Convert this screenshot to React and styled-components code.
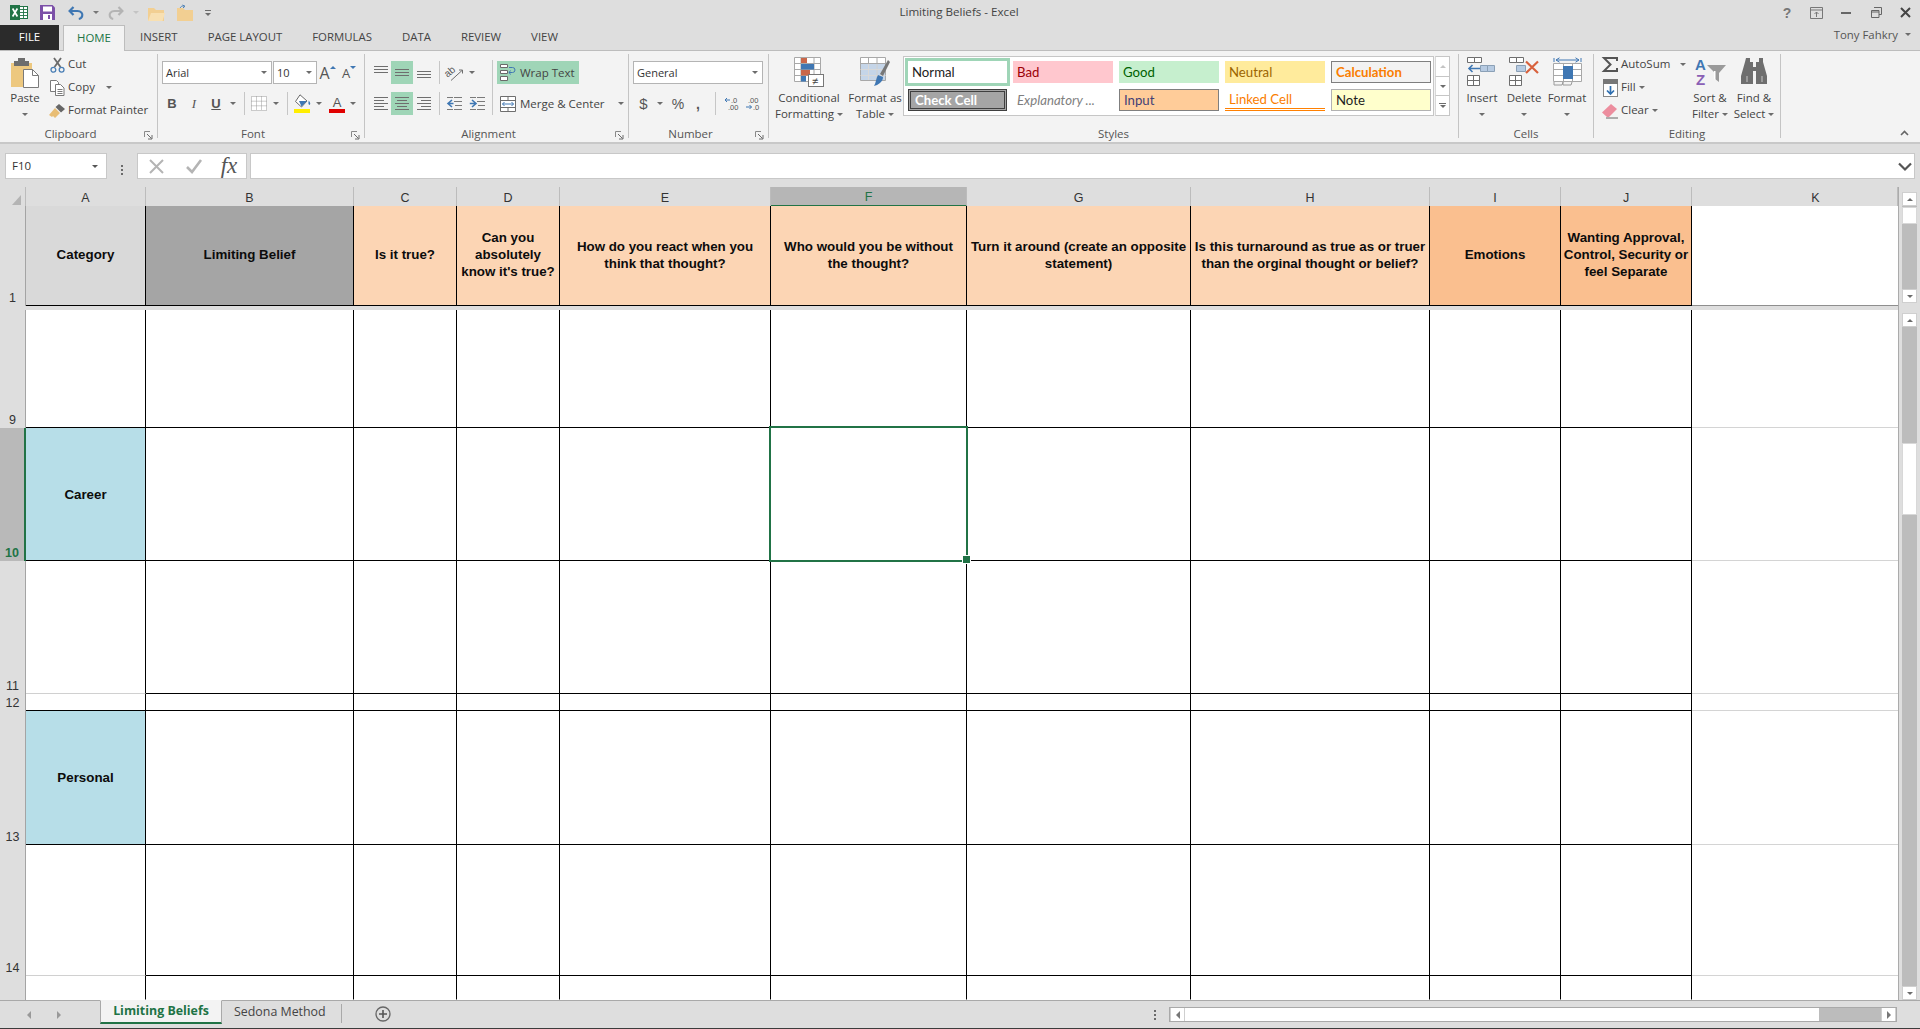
import React from "react";
import styled, { createGlobalStyle } from "styled-components";

const UI = `"Open Sans", "Noto Sans", sans-serif`;
const CELL = `"Liberation Sans", Arial, sans-serif`;
const GREEN = "#217346";

const Global = createGlobalStyle`
  html, body { margin: 0; padding: 0; overflow: hidden; background: #dedede; }
  * { box-sizing: border-box; }
`;

const Win = styled.div`
  width: 1920px; height: 1029px; overflow: hidden;
  display: flex; flex-direction: column;
  background: #dedede; color: #444; font: 11.5px/16px ${UI};
  border-bottom: 1px solid #3c3c3c;
`;
const Svg = styled.svg`display: block; flex-shrink: 0; overflow: visible;`;
const Slot = styled.div`
  width: ${p => p.$w}px; height: ${p => p.$h || 23}px; flex-shrink: 0;
  display: flex; align-items: center; justify-content: center;
  background: ${p => p.$on ? "#9fd5b7" : "transparent"};
`;
const Caret = styled.span`
  display: inline-block; width: 0; height: 0; flex-shrink: 0;
  border-left: 3px solid transparent; border-right: 3px solid transparent;
  border-top: 3px solid ${p => p.$c || "#6c6c6c"};
  margin-left: ${p => p.$ml || 0}px; vertical-align: middle;
`;
const CaretUp = styled(Caret)`
  border-top: 0; border-bottom: 3px solid ${p => p.$c || "#6c6c6c"};
`;
const RaisedCaret = styled(Caret)`margin-bottom: 10px;`;
const RaisedCaretUp = styled(CaretUp)`margin-bottom: 10px;`;
const FadedCaretUp = styled(CaretUp)`opacity: .4;`;

/* title bar */
const TitleBar = styled.div`
  height: 25px; display: grid; grid-template-columns: 1fr auto 1fr; align-items: center;
`;
const Qat = styled.div`display: flex; align-items: center; padding-left: 10px;`;
const QatMore = styled.div`display: flex; flex-direction: column; align-items: center; gap: 2px;`;
const QatDash = styled.span`width: 6px; height: 1px; background: #6c6c6c;`;
const Title = styled.div`color: #444; font-size: 11.6px; padding-right: 2px; padding-bottom: 1px;`;
const WinControls = styled.div`display: flex; justify-content: flex-end;`;
const HelpMark = styled.span`font: bold 14px/16px ${CELL}; color: #777;`;

/* tabs */
const TabRow = styled.div`height: 25px; display: flex; align-items: stretch; position: relative; z-index: 1;`;
const FileTab = styled.div`
  width: 59px; margin-right: 4px; background: #2b2b2b; color: #fff;
  display: flex; align-items: center; justify-content: center; font-size: 11.4px; padding-bottom: 1px;
`;
const Tab = styled.div`
  padding: 0 ${p => p.$active ? 14 : 15}px 2px; display: flex; align-items: center; font-size: 11.4px;
  color: ${p => p.$active ? GREEN : "#444"};
  ${p => p.$active && `background: #f3f3f3; border: 1px solid #bdbdbd; border-bottom: 0; height: 26px; width: 62px; justify-content: center;`}
`;
const User = styled.div`
  margin-left: auto; padding: 0 9px 6px 0; display: flex; align-items: center; font-size: 11.4px; color: #555;
`;

/* ribbon */
const Ribbon = styled.div`
  height: 94px; flex-shrink: 0; display: flex; align-items: flex-start;
  background: #f3f3f3; border-top: 1px solid #bdbdbd; border-bottom: 2px solid #c8c8c8;
  padding-top: 3px;
`;
const Group = styled.section`
  width: ${p => p.$w}px; height: 84px; flex-shrink: 0;
  display: flex; flex-direction: column; border-right: 1px solid #c4c4c4;
`;
const GroupBody = styled.div`
  height: 71px; display: flex; align-items: flex-start;
  padding-left: ${p => p.$pl || 0}px;
`;
const GroupLabel = styled.div`
  height: 13px; line-height: 18px; display: flex; align-items: flex-start; color: #555;
`;
const GroupName = styled.span`flex: 1; text-align: center;`;
const LauncherBox = styled.span`width: 16px; padding: 6px 0 0 3px; flex-shrink: 0;`;
const Collapse = styled.div`margin: 76px 11px 0 auto;`;

const Big = styled.div`
  width: ${p => p.$w}px; flex-shrink: 0; display: flex; flex-direction: column; align-items: center;
  text-align: center; margin-left: ${p => p.$ml || 0}px; color: #444; white-space: nowrap;
`;
const BigIcon = styled.div`height: 36px; display: flex; align-items: flex-start; justify-content: center; padding-top: ${p => p.$pt ?? 3}px;`;
const BigLine = styled.span`height: 16px; display: block;`;
const Stack = styled.div`
  display: flex; flex-direction: column; margin-left: ${p => p.$ml || 0}px; margin-top: -1px;
  width: ${p => p.$w ? p.$w + "px" : "auto"}; flex-shrink: 0;
`;
const TwoRows = styled.div`
  display: flex; flex-direction: column; margin-left: ${p => p.$ml || 0}px;
  width: ${p => p.$w ? p.$w + "px" : "auto"}; flex-shrink: 0; padding-top: 7px; gap: 8px;
`;
const Line = styled.div`display: flex; align-items: center; height: 23px; white-space: nowrap; color: #444;`;
const IconBox = styled.span`width: 16px; margin-right: 3px; flex-shrink: 0; display: flex; justify-content: center;`;
const LineText = styled.span`position: relative; top: -1px;`;

const Combo = styled.div`
  width: ${p => p.$w}px; height: 23px; margin-right: ${p => p.$mr || 0}px; flex-shrink: 0;
  background: #fff; border: 1px solid #b4b4b4; padding: 0 4px 0 3px;
  display: flex; align-items: center; justify-content: space-between; color: #333;
  font-size: 11px;
`;
const GrowA = styled.span`font: ${p => p.$s}px/18px ${UI}; color: #555;`;
const FontBtn = styled.span`
  font: ${p => p.$i ? "italic" : "normal"} ${p => p.$b ? "bold" : "normal"} 13px/16px ${p => p.$serif ? `"Liberation Serif", serif` : CELL};
  color: #555; text-decoration: ${p => p.$u ? "underline" : "none"};
`;
const ColorStack = styled.div`display: flex; flex-direction: column; align-items: center;`;
const ColorBar = styled.span`width: 16px; height: 4px; background: #e00000; margin-top: -2px;`;
const Sep = styled.span`width: 1px; height: 23px; background: #c6c6c6; display: block;`;
const VSep = styled.span`width: 1px; height: 55px; margin-top: 6px; background: #c6c6c6; flex-shrink: 0;`;
const WideBtn = styled.div`
  width: ${p => p.$w}px; height: 23px; display: flex; align-items: center; padding-left: 3px; gap: 4px; white-space: nowrap;
  background: ${p => p.$on ? "#9fd5b7" : "transparent"}; color: #444;
`;
const NumSym = styled.span`font: ${p => p.$s || 14}px/18px ${CELL}; color: #555;`;
const BoldSym = styled.b`font-weight: 700;`;

/* styles gallery */
const Gallery = styled.div`
  display: flex; margin-top: 2px; height: 60px; flex-shrink: 0;
`;
const GalleryGrid = styled.div`
  width: 531px; height: 60px; background: #fff; border: 1px solid #c6c6c6;
  padding: 4px 3px 4px 4px; display: grid; gap: 6px;
  grid-template-columns: 99px repeat(4, 100px); grid-template-rows: 22px 22px;
`;
const StyleCell = styled.div`
  display: flex; align-items: center; padding-left: 4px; white-space: nowrap;
  font: ${p => p.$w || 400} 13.2px/20px Lato, sans-serif;
  font-style: ${p => p.$it ? "italic" : "normal"};
  color: ${p => p.$c || "#222"};
  background: ${p => p.$bg || "transparent"};
  border: ${p => p.$bd || "0"};
  border-bottom: ${p => p.$bb || ""};
  outline: ${p => p.$ring ? "3px solid #9fd5b7" : "0"};
`;
const GalleryScroll = styled.div`width: 15px; display: flex; flex-direction: column; margin-left: 1px;`;
const GalleryBtn = styled.div`
  flex: 1; background: #fff; border: 1px solid #c6c6c6; border-left: 1px solid #d8d8d8; margin-top: ${p => p.$mt || 0}px;
  display: flex; flex-direction: column; gap: 1px; align-items: center; justify-content: center;
`;
const GalleryDash = styled.span`width: 7px; height: 1px; background: #6c6c6c;`;

/* formula bar */
const FormulaRow = styled.div`
  height: 43px; flex-shrink: 0; padding: 9px 5px 0 5px; display: flex; align-items: flex-start;
`;
const BoxBase = styled.div`
  height: 26px; background: #fff; border: 1px solid #c8c8c8; display: flex; align-items: center;
`;
const NameBox = styled(BoxBase)`width: 102px; padding: 0 8px 0 6px; justify-content: space-between; color: #333;`;
const Dots = styled.div`width: ${p => p.$w}px; flex-shrink: 0; display: flex; flex-direction: column; gap: 2px; align-items: center; justify-content: center; height: 100%;`;
const Dot = styled.span`width: 2px; height: 2px; background: #6a6a6a;`;
const FxBox = styled(BoxBase)`width: 110px; margin-right: 3px;`;
const FxMark = styled.span`font: italic 23px/22px "Liberation Serif", serif; color: #555;`;
const FormulaInput = styled(BoxBase)`flex: 1; justify-content: flex-end; padding-right: 2px;`;

/* sheet */
const SheetArea = styled.div`flex: 1; min-height: 0; display: flex;`;
const SheetMain = styled.div`width: 1898px; display: flex; flex-direction: column; overflow: hidden;`;
const COLS = "26px 120px 208px 103px 103px 211px 196px 224px 239px 131px 131px 206px";
const GridRow = styled.div`
  display: grid; grid-template-columns: ${COLS}; height: ${p => p.$h}px; flex-shrink: 0;
`;
const Corner = styled.div`
  border-right: 1px solid #bcbcbc; border-bottom: 1px solid #9f9f9f; background: #dedede;
  display: flex; align-items: flex-end; justify-content: flex-end; padding: 0 4px 1px 0;
`;
const CornerMark = styled.span`
  width: 9px; height: 10px; background: #b4b4b4; clip-path: polygon(100% 0, 100% 100%, 0 100%);
`;
const ColHead = styled.div`
  display: flex; align-items: center; justify-content: center;
  font: 12.5px/16px ${CELL};
  border-right: 1px solid #bcbcbc; padding-top: 2px;
  padding-left: ${p => p.$pl || 0}px;
  background: ${p => p.$sel ? "#b6b6b6" : "#dedede"};
  color: ${p => p.$sel ? GREEN : "#333"};
  border-bottom: ${p => p.$sel ? `2px solid ${GREEN}` : "1px solid #9f9f9f"};
`;
const RowHead = styled.div`
  display: flex; align-items: flex-end; justify-content: center;
  font: ${p => p.$sel ? "bold" : "normal"} 12.5px/14px ${CELL};
  padding-bottom: 1px;
  background: ${p => p.$sel ? "#b9b9b9" : "#dedede"};
  color: ${p => p.$sel ? GREEN : "#333"};
  border-right: ${p => p.$sel ? `2px solid ${GREEN}` : "1px solid #a4a4a4"};
`;
const HeadCell = styled.div`
  display: flex; align-items: center; justify-content: center; text-align: center;
  white-space: pre-line; padding: 0 1px 2px;
  font: bold 13.33px/17px ${CELL}; color: #0c0c0c;
  background: ${p => p.$bg};
  border-right: ${p => p.$open ? "0" : "1px solid #000"};
  border-bottom: 1px solid ${p => p.$open ? "#8e8e8e" : "#000"};
`;
const Freeze = styled.div`height: 4px; flex-shrink: 0; background: #dedede;`;
const Cell = styled.div`
  position: relative; display: flex; align-items: center; justify-content: center;
  font: bold 13.33px/17px ${CELL}; color: #0c0c0c;
  background: ${p => p.$bg || "#fff"};
  border-right: ${p => p.$open ? "0" : "1px solid #000"};
  border-bottom: 1px solid ${p => p.$line || "#000"};
`;
const Selected = styled(Cell)`
  &::before {
    content: ""; position: absolute; left: -2px; top: -2px; right: -2px; bottom: -2px;
    border: 2px solid ${GREEN}; z-index: 2;
  }
  &::after {
    content: ""; position: absolute; right: -5px; bottom: -4px; width: 7px; height: 7px;
    background: ${GREEN}; border: 1px solid #fff; z-index: 3;
  }
`;

/* scrollbars */
const ScrollCol = styled.div`
  width: 22px; flex-shrink: 0; border-left: 1px solid #ababab; padding: 5px 3px 0 3px;
  display: flex; flex-direction: column; background: #dedede;
`;
const VBar = styled.div`
  display: flex; flex-direction: column; margin-top: ${p => p.$mt || 0}px;
  height: ${p => p.$h ? p.$h + "px" : "auto"}; flex: ${p => p.$h ? "none" : 1}; background: #bcbcbc;
`;
const ScrollBtn = styled.div`
  width: 100%; height: ${p => p.$h || 14}px; flex-shrink: 0; background: #fff; border: 1px solid #cfcfcf;
  display: flex; align-items: center; justify-content: center;
`;
const Thumb = styled.div`height: ${p => p.$h}px; background: #fff; flex-shrink: 0; border: 1px solid #d8d8d8; margin-top: ${p => p.$mt || 0}px;`;
const Track = styled.div`flex: 1;`;

/* sheet tabs */
const TabBar = styled.div`
  height: 28px; flex-shrink: 0; display: flex; align-items: stretch; background: #dedede; border-top: 1px solid #a9a9a9;
  padding-left: 14px; color: #444;
`;
const SheetTab = styled.div`
  width: 122px; margin: -1px 0 4px 28px; background: #f3f3f3; border: 1px solid #a9a9a9; border-top-color: #f3f3f3;
  border-bottom: 2px solid ${GREEN}; display: flex; align-items: center; justify-content: center;
  font: bold 12.4px/16px ${UI}; color: ${GREEN}; padding-bottom: 1px;
`;
const SheetTab2 = styled.div`
  padding: 0 13px 5px 12px; width: 119px; display: flex; align-items: center;
  font-size: 12.4px; color: #444; white-space: nowrap;
`;
const TabSep = styled.span`width: 1px; height: 19px; margin-top: 3px; background: #a9a9a9;`;
const PlusBox = styled.div`margin: 5px 0 0 33px;`;
const HScroll = styled.div`
  margin: 6px 23px 0 0; width: 728px; height: 15px; display: flex; background: #bcbcbc; border: 1px solid #a9a9a9;
`;
const HBtn = styled.div`width: 15px; background: #fff; border-right: 1px solid #cfcfcf; border-left: 1px solid #cfcfcf; display: flex; align-items: center; justify-content: center;`;
const HThumb = styled.div`width: 634px; background: #fff;`;
const TabDots = styled.div`margin: 6px 11px 0 auto; height: 15px; width: 6px;`;

/* ---------- icons ---------- */
const ExcelIcon = () => (
  <Svg width="18" height="15" viewBox="0 0 18 15">
    <rect x="6.5" y="1.5" width="11" height="12" fill="#fff" stroke={GREEN} />
    <path d="M10 4.5h7M10 7.5h7M10 10.5h7M13.5 2v11" stroke={GREEN} strokeWidth=".9" />
    <rect width="10" height="15" fill={GREEN} />
    <path d="M2.6 3.5 7.4 11.5M7.4 3.5 2.6 11.5" stroke="#fff" strokeWidth="1.7" />
  </Svg>
);
const SaveIcon = () => (
  <Svg width="15" height="15" viewBox="0 0 15 15">
    <path d="M0 0h12.5L15 2.5V15H0z" fill="#7c50a8" />
    <rect x="3" y="1.5" width="9" height="5" fill="#fff" />
    <rect x="3" y="9" width="9" height="6" fill="#fff" />
    <rect x="8" y="10" width="2" height="4" fill="#7c50a8" />
  </Svg>
);
const Undo = ({ c, flip }) => (
  <Svg width="16" height="14" viewBox="0 0 16 14">
    <g transform={flip ? "translate(16 0) scale(-1 1)" : undefined}>
      <path d="M5.5 1 1.6 5l3.900 4" fill="none" stroke={c} strokeWidth="2.200" />
      <path d="M2 5h7.500c3.600 0 5.400 2.600 4.700 5-.5 1.800-2 2.800-3.400 3" fill="none" stroke={c} strokeWidth="2.200" />
    </g>
  </Svg>
);
const Folder = ({ arrow }) => (
  <Svg width="17" height="16" viewBox="0 0 17 16">
    {arrow && <path d="M3 3.500C3.500 1.500 5 .8 7 1M5.500 0 8 1.200 6 3" fill="none" stroke="#4a7fb5" strokeWidth="1" />}
    <path d="M0 3h6l2 2h8v11H0z" fill="#f2cf92" />
    {!arrow && <path d="M3 8h14l-2.500 8H0z" fill="#f8e0b2" />}
  </Svg>
);
const Launcher = () => (
  <Svg width="9" height="9" viewBox="0 0 9 9">
    <path d="M.5 6V.5H6" fill="none" stroke="#8a8a8a" />
    <path d="M3 3l4.500 4.500M8 4v4H4" fill="none" stroke="#6a6a6a" />
  </Svg>
);
const PasteIcon = () => (
  <Svg width="29" height="30" viewBox="0 0 29 30">
    <rect y="5" width="21" height="24" fill="#edc87f" />
    <rect x="7" y="0" width="7" height="4" fill="#6d6d6d" />
    <rect x="3" y="3" width="15" height="5" fill="#6d6d6d" />
    <path d="M12.500 11.500h9l6 6v12h-15z" fill="#fff" stroke="#7a7a7a" />
    <path d="M21.500 11.500v6h6" fill="none" stroke="#7a7a7a" />
  </Svg>
);
const CutIcon = () => (
  <Svg width="15" height="16" viewBox="0 0 15 16">
    <path d="M4.500 10 11 1M10.500 10 4 1" stroke="#6a6a6a" strokeWidth="1.800" />
    <circle cx="3.400" cy="12.800" r="2.400" fill="none" stroke="#4a7fb5" strokeWidth="1.300" />
    <circle cx="11.600" cy="12.800" r="2.400" fill="none" stroke="#4a7fb5" strokeWidth="1.300" />
  </Svg>
);
const CopyIcon = () => (
  <Svg width="15" height="16" viewBox="0 0 15 16">
    <path d="M.5.500h6l2 2v9h-8z" fill="#fff" stroke="#7a7a7a" />
    <path d="M5.500 4.500h5l3.500 3.500v7.500H5.500z" fill="#fff" stroke="#7a7a7a" />
    <path d="M7.500 9.500h5M7.500 11.500h5M7.500 13.500h5" stroke="#7a7a7a" />
  </Svg>
);
const PainterIcon = () => (
  <Svg width="17" height="16" viewBox="0 0 17 16">
    <path d="M0 12 6 5l5 5-5 5-2-2-1 1z" fill="#e8bd74" />
    <path d="M6.500 4 10 1l6 5-4 3.500z" fill="#666" />
  </Svg>
);
const Borders = () => (
  <Svg width="16" height="15" viewBox="0 0 16 15">
    <path d="M.5.500h15v14H.500zM5.500.500v14M10.500.500v14M.500 5.200h15M.500 9.800h15" fill="#fff" stroke="#9a9a9a" strokeDasharray="1 1" />
  </Svg>
);
const FillIcon = () => (
  <Svg width="17" height="19" viewBox="0 0 17 19">
    <path d="M6 .8 13 7l-5.500 6L1.500 7.500z" fill="#fff" stroke="#6a6a6a" />
    <path d="M14.800 6.500c1.500 2.200 2 3.400.9 4.400-1.400 0-1.600-1.800-.9-4.400zM5 7h8l-5.500 5.500z" fill="#3f77b3" />
    <rect y="15" width="16" height="4" fill="#ffee00" />
  </Svg>
);
const Bars = ({ ys, w = 14, h = 14, lens }) => (
  <Svg width={w} height={h} viewBox={`0 0 ${w} ${h}`}>
    {ys.map((y, i) => {
      const l = lens ? lens[i] : [0, w];
      return <path key={y} d={`M${l[0]} ${y + .5}H${l[1]}`} stroke="#6e6e6e" />;
    })}
  </Svg>
);
const Orientation = () => (
  <Svg width="20" height="18" viewBox="0 0 20 18">
    <text x="0" y="11" fontFamily="Liberation Sans" fontSize="10" fill="#555" transform="rotate(-40 5 9)">ab</text>
    <path d="M6 16.500 17 6.500M14 6h3.500v3.500" fill="none" stroke="#6e6e6e" />
  </Svg>
);
const Indent = ({ out }) => (
  <Svg width="16" height="13" viewBox="0 0 16 13">
    {out
      ? <path d="M6 3 2 6.500 6 10M2 6.500h5.500" fill="none" stroke="#3f77b3" strokeWidth="1.600" />
      : <path d="M3 3l4 3.500L3 10M7 6.500H.8" fill="none" stroke="#3f77b3" strokeWidth="1.600" />}
    <path d="M8 .5h8M8 4.500h8M9 8.500h7M8 12.500h8" stroke="#7a7a7a" />
    <path d="M1 .5h6M1 12.500h6" stroke="#7a7a7a" />
  </Svg>
);
const WrapIcon = () => (
  <Svg width="16" height="17" viewBox="0 0 16 17">
    <path d="M.5.500h7v3h-7zM.500 6.500h7v3h-7zM.500 12.500h7v4h-7z" fill="#fff" stroke="#6a6a6a" />
    <path d="M9 3.500h3.500q2.500 0 2.500 2.500t-2.500 2.500H9M10.800 6.600 8.800 8.500l2 1.900" fill="none" stroke="#3f77b3" />
  </Svg>
);
const MergeIcon = () => (
  <Svg width="16" height="16" viewBox="0 0 16 16">
    <path d="M.5.500h15v15H.500zM.500 4.500h15M.500 11.500h15M8 .5v4M8 11.500v4" fill="#fff" stroke="#6e6e6e" />
    <path d="M2.500 8h11M4.500 6 2.500 8l2 2M11.500 6l2 2-2 2" fill="none" stroke="#3f77b3" />
  </Svg>
);
const DecIcon = ({ more }) => (
  <Svg width="15" height="15" viewBox="0 0 15 15">
    <text x={more ? 3 : 7} y="6.500" fontFamily="Liberation Sans" fontSize="7.500" fill="#555">{more ? ".00" : ".0"}</text>
    <text x={more ? 8 : 4} y="14" fontFamily="Liberation Sans" fontSize="7.500" fill="#555">{more ? ".0" : ".00"}</text>
    {more
      ? <path d="M1 11h5.500M4.500 9l2 2-2 2" fill="none" stroke="#3f77b3" />
      : <path d="M1 4h5M3 2 1 4l2 2" fill="none" stroke="#3f77b3" />}
  </Svg>
);
const CondIcon = () => (
  <Svg width="30" height="30" viewBox="0 0 30 30">
    <path d="M.5.500h26v24H.500zM.500 6.500h26M.500 12.500h26M.500 18.500h26M7 .5v24M20 .5v24" fill="#fff" stroke="#a8a8a8" />
    <rect x="7" y="1" width="6" height="5" fill="#c9674a" />
    <rect x="7" y="7" width="13" height="5.500" fill="#3f77b3" />
    <rect x="7" y="13" width="9" height="5.500" fill="#c9674a" />
    <rect x="7" y="19" width="5" height="5.500" fill="#3f77b3" />
    <rect x="14.500" y="17.500" width="15" height="12" fill="#fff" stroke="#777" />
    <text x="18" y="27.500" fontFamily="Liberation Sans" fontSize="11" fill="#444">≠</text>
  </Svg>
);
const TableIcon = () => (
  <Svg width="30" height="30" viewBox="0 0 30 30">
    <path d="M.5.500h25v23H.500zM.500 6.500h25M.500 12.500h25M.500 18.500h25M8.500.500v23M17 .5v23" fill="#fff" stroke="#a8a8a8" />
    <rect x="1" y="7" width="24" height="16" fill="#b7cbe2" opacity=".8" />
    <path d="M.5 12.500h25M.500 18.500h25M8.500 7v16M17 7v16" stroke="#d8d8d8" />
    <path d="M20 17 28 3l2 2-7 14z" fill="#777" />
    <path d="M18 18l5 2c0 5-5 8-9 9 2-3 2-8 4-11z" fill="#3f77b3" />
  </Svg>
);
const CellsBase = () => (
  <>
    <path d="M.5.500h7v5h-7zM7.500.500h7v5h-7z" fill="#fff" stroke="#6e6e6e" />
    <path d="M.5 18.500h12v10H.500zM6.500 18.500v10M.500 23.500h12" fill="#fff" stroke="#6e6e6e" />
  </>
);
const InsertIcon = () => (
  <Svg width="30" height="29" viewBox="0 0 30 29">
    <CellsBase />
    <path d="M13 11.500H2M5.500 8l-3.500 3.500L5.500 15" fill="none" stroke="#3f77b3" strokeWidth="1.600" />
    <path d="M13.500 8.500h7v6h-7zM20.500 8.500h7v6h-7z" fill="#b7cbe2" stroke="#8ba0b6" />
  </Svg>
);
const DeleteIcon = () => (
  <Svg width="31" height="29" viewBox="0 0 31 29">
    <CellsBase />
    <path d="M7.500 8.500h9v6h-9z" fill="#b7cbe2" stroke="#8ba0b6" />
    <path d="M17 4.500 29 16M29 4.500 17 16" stroke="#d8613c" strokeWidth="2.200" />
  </Svg>
);
const FormatIcon = () => (
  <Svg width="29" height="29" viewBox="0 0 29 29">
    <path d="M1 1v4M28 1v4M3 3h23M6.500.8 3 3l3.500 2.200M22.500.8 26 3l-3.500 2.200" fill="none" stroke="#3f77b3" />
    <path d="M.5 6.500h28v18H.500zM.500 12.500h28M.500 18.500h28M10.500 6.500v18M19.500 6.500v18" fill="#fff" stroke="#a8a8a8" />
    <rect x="10" y="9" width="10" height="13" fill="#3f77b3" />
    <path d="M1 25v3h8l1-3M10 25v3h8l1-3" fill="none" stroke="#9a9a9a" />
  </Svg>
);
const SigmaIcon = () => (
  <Svg width="16" height="15" viewBox="0 0 16 15">
    <path d="M15 4V1H2l6.500 6.500L2 14h13v-3" fill="none" stroke="#555" strokeWidth="2" />
  </Svg>
);
const FillDown = () => (
  <Svg width="15" height="18" viewBox="0 0 15 18">
    <rect x=".5" y=".5" width="14" height="17" fill="#fff" stroke="#888" />
    <rect width="15" height="5" fill="#777" />
    <path d="M7.500 7v8M4 11.500l3.500 3.500 3.500-3.500" fill="none" stroke="#2f6fb0" strokeWidth="1.700" />
  </Svg>
);
const Eraser = () => (
  <Svg width="16" height="16" viewBox="0 0 16 16">
    <path d="M0 9.500 9 1l6 5-8 8H5z" fill="#ec8d9e" />
    <path d="M4 15h12" stroke="#666" />
  </Svg>
);
const SortIcon = () => (
  <Svg width="31" height="29" viewBox="0 0 31 29">
    <text x="0" y="13" fontFamily="Liberation Sans" fontWeight="bold" fontSize="15" fill="#3f77b3">A</text>
    <text x="1" y="28" fontFamily="Liberation Sans" fontWeight="bold" fontSize="15" fill="#8a5fb5">Z</text>
    <path d="M12 8h19l-7 8v9l-4-3v-6z" fill="#9a9a9a" />
    <path d="M19 14v8l1.500 1v-9z" fill="#fff" />
  </Svg>
);
const FindIcon = () => (
  <Svg width="27" height="27" viewBox="0 0 27 27">
    <path d="M5 1h4v4h3v5h3V5h3V1h4v4l4 14v8H15V14h-3v13H0v-8L4 5z" fill="#6e6e6e" />
    <path d="M6 19v6M21 19v6" stroke="#9a9a9a" strokeWidth="2" />
  </Svg>
);

const Launch = () => <LauncherBox><Launcher /></LauncherBox>;

const BigBtn = ({ w, ml, icon, pt, l1, l2, caret }) => (
  <Big $w={w} $ml={ml}>
    <BigIcon $pt={pt}>{icon}</BigIcon>
    <BigLine>{l1}</BigLine>
    <BigLine>{l2}{caret && <Caret $ml={l2 ? 3 : 0} />}</BigLine>
  </Big>
);

/* ---------- data ---------- */
const colLetters = ["A", "B", "C", "D", "E", "F", "G", "H", "I", "J", "K"];
const headers = [
  ["Category", "#d9d9d9"],
  ["Limiting Belief", "#a5a5a5"],
  ["Is it true?", "#fcd5b4"],
  ["Can you\nabsolutely\nknow it's true?", "#fcd5b4"],
  ["How do you react when you\nthink that thought?", "#fcd5b4"],
  ["Who would you be without\nthe thought?", "#fcd5b4"],
  ["Turn it around (create an opposite\nstatement)", "#fcd5b4"],
  ["Is this turnaround as true as or truer\nthan the orginal thought or belief?", "#fcd5b4"],
  ["Emotions", "#fabf8f"],
  ["Wanting Approval,\nControl, Security or\nfeel Separate", "#fabf8f"],
];
const rows = [
  { n: 9, h: 118, a: "" },
  { n: 10, h: 133, a: "Career", bg: "#b7dee8", sel: true },
  { n: 11, h: 133, a: "", aLine: "#d0d0d0" },
  { n: 12, h: 17, a: "" },
  { n: 13, h: 134, a: "Personal", bg: "#b7dee8" },
  { n: 14, h: 131, a: "", aLine: "#d0d0d0" },
  { n: "", h: 24, a: "", last: true },
];
const middle = [0, 1, 2, 3, 4, 5, 6, 7, 8];

export default function App() {
  return (
    <Win>
      <Global />
      <TitleBar>
        <Qat>
          <ExcelIcon />
          <Slot $w={12} $h={15} />
          <SaveIcon />
          <Slot $w={13} $h={15} />
          <Undo c="#3f77b3" />
          <Slot $w={24} $h={15}><Caret $c="#777" /></Slot>
          <Undo c="#b4b4b4" flip />
          <Slot $w={24} $h={15}><Caret $c="#c4c4c4" /></Slot>
          <Folder />
          <Slot $w={12} $h={15} />
          <Folder arrow />
          <Slot $w={28} $h={15}><QatMore><QatDash /><Caret /></QatMore></Slot>
        </Qat>
        <Title>Limiting Beliefs - Excel</Title>
        <WinControls>
          <Slot $w={30} $h={25}><HelpMark>?</HelpMark></Slot>
          <Slot $w={28} $h={25}>
            <Svg width="13" height="12" viewBox="0 0 13 12"><path d="M.5.500h12v11H.500zM.500 3h12M6.500 10V5M4.500 7l2-2 2 2" fill="none" stroke="#777" /></Svg>
          </Slot>
          <Slot $w={32} $h={25}><Svg width="10" height="2" viewBox="0 0 10 2"><rect width="10" height="2" fill="#666" /></Svg></Slot>
          <Slot $w={28} $h={25}>
            <Svg width="11" height="11" viewBox="0 0 11 11"><path d="M3 .500h7.500v7H8M.500 3.500H8v7H.500zM.500 5H8" fill="none" stroke="#666" /></Svg>
          </Slot>
          <Slot $w={30} $h={25}>
            <Svg width="11" height="11" viewBox="0 0 11 11"><path d="M1 1l9 9M10 1l-9 9" stroke="#444" strokeWidth="2" /></Svg>
          </Slot>
        </WinControls>
      </TitleBar>

      <TabRow>
        <FileTab>FILE</FileTab>
        <Tab $active>HOME</Tab>
        <Tab>INSERT</Tab>
        <Tab>PAGE LAYOUT</Tab>
        <Tab>FORMULAS</Tab>
        <Tab>DATA</Tab>
        <Tab>REVIEW</Tab>
        <Tab>VIEW</Tab>
        <User>Tony Fahkry<Caret $ml={7} /></User>
      </TabRow>

      <Ribbon>
        <Group $w={158}>
          <GroupBody>
            <BigBtn w={36} ml={7} icon={<PasteIcon />} pt={4} l1="Paste" caret />
            <Stack $ml={6}>
              <Line><IconBox><CutIcon /></IconBox><LineText>Cut</LineText></Line>
              <Line><IconBox><CopyIcon /></IconBox><LineText>Copy</LineText><Caret $ml={11} /></Line>
              <Line><IconBox><PainterIcon /></IconBox><LineText>Format Painter</LineText></Line>
            </Stack>
          </GroupBody>
          <GroupLabel><GroupName>Clipboard</GroupName><Launch /></GroupLabel>
        </Group>

        <Group $w={207}>
          <GroupBody $pl={4}>
            <TwoRows>
              <Line>
                <Combo $w={110} $mr={1}>Arial<Caret /></Combo>
                <Combo $w={44}>10<Caret /></Combo>
                <Slot $w={21}><GrowA $s={16}>A</GrowA><RaisedCaretUp $c="#3f77b3" /></Slot>
                <Slot $w={22}><GrowA $s={13}>A</GrowA><RaisedCaret $c="#3f77b3" /></Slot>
              </Line>
              <Line>
                <Slot $w={20}><FontBtn $b>B</FontBtn></Slot>
                <Slot $w={24}><FontBtn $i $serif>I</FontBtn></Slot>
                <Slot $w={20}><FontBtn $b $u>U</FontBtn></Slot>
                <Slot $w={14}><Caret /></Slot>
                <Slot $w={8}><Sep /></Slot>
                <Slot $w={22}><Borders /></Slot>
                <Slot $w={12}><Caret /></Slot>
                <Slot $w={10}><Sep /></Slot>
                <Slot $w={20}><FillIcon /></Slot>
                <Slot $w={14}><Caret /></Slot>
                <Slot $w={22}>
                  <ColorStack><FontBtn>A</FontBtn><ColorBar /></ColorStack>
                </Slot>
                <Slot $w={10}><Caret /></Slot>
              </Line>
            </TwoRows>
          </GroupBody>
          <GroupLabel><GroupName>Font</GroupName><Launch /></GroupLabel>
        </Group>

        <Group $w={264}>
          <GroupBody $pl={6}>
            <TwoRows $w={121}>
              <Line>
                <Slot $w={20}><Bars ys={[1, 4, 7]} h={16} /></Slot>
                <Slot $w={22} $on><Bars ys={[3, 6, 9]} h={14} /></Slot>
                <Slot $w={22}><Bars ys={[6, 9, 12]} h={15} /></Slot>
                <Slot $w={8}><Sep /></Slot>
                <Slot $w={34}><Orientation /><Caret $ml={4} /></Slot>
              </Line>
              <Line>
                <Slot $w={20}><Bars ys={[0, 3, 6, 9, 12]} h={14} lens={[[0, 14], [0, 10], [0, 14], [0, 10], [0, 14]]} /></Slot>
                <Slot $w={22} $on><Bars ys={[0, 3, 6, 9, 12]} h={14} lens={[[0, 14], [2, 12], [0, 14], [2, 12], [0, 14]]} /></Slot>
                <Slot $w={22}><Bars ys={[0, 3, 6, 9, 12]} h={14} lens={[[0, 14], [4, 14], [0, 14], [4, 14], [0, 14]]} /></Slot>
                <Slot $w={8}><Sep /></Slot>
                <Slot $w={22}><Indent out /></Slot>
                <Slot $w={24}><Indent /></Slot>
              </Line>
            </TwoRows>
            <VSep />
            <TwoRows $ml={4}>
              <WideBtn $w={82} $on><WrapIcon />Wrap Text</WideBtn>
              <WideBtn $w={122}><MergeIcon />Merge &amp; Center<Caret $ml={9} /></WideBtn>
            </TwoRows>
          </GroupBody>
          <GroupLabel><GroupName>Alignment</GroupName><Launch /></GroupLabel>
        </Group>

        <Group $w={140}>
          <GroupBody $pl={4}>
            <TwoRows>
              <Line><Combo $w={130}>General<Caret /></Combo></Line>
              <Line>
                <Slot $w={21}><NumSym $s={15}>$</NumSym></Slot>
                <Slot $w={12}><Caret /></Slot>
                <Slot $w={24}><NumSym $s={14}>%</NumSym></Slot>
                <Slot $w={16}><NumSym $s={14}><BoldSym>,</BoldSym></NumSym></Slot>
                <Slot $w={18}><Sep /></Slot>
                <Slot $w={15}><DecIcon /></Slot>
                <Slot $w={26}><DecIcon more /></Slot>
              </Line>
            </TwoRows>
          </GroupBody>
          <GroupLabel><GroupName>Number</GroupName><Launch /></GroupLabel>
        </Group>

        <Group $w={690}>
          <GroupBody $pl={7}>
            <BigBtn w={66} icon={<CondIcon />} l1="Conditional" l2="Formatting" caret />
            <BigBtn w={56} ml={5} icon={<TableIcon />} l1="Format as" l2="Table" caret />
            <Gallery>
              <GalleryGrid>
                <StyleCell $ring>Normal</StyleCell>
                <StyleCell $bg="#ffc7ce" $c="#9c0006">Bad</StyleCell>
                <StyleCell $bg="#c6efce" $c="#006100">Good</StyleCell>
                <StyleCell $bg="#ffeb9c" $c="#9c6500">Neutral</StyleCell>
                <StyleCell $bg="#f2f2f2" $c="#fa7d00" $w={700} $bd="1px solid #7f7f7f">Calculation</StyleCell>
                <StyleCell $bg="#a5a5a5" $c="#fff" $w={700} $bd="3px double #3f3f3f">Check Cell</StyleCell>
                <StyleCell $c="#7f7f7f" $it>Explanatory ...</StyleCell>
                <StyleCell $bg="#ffcc99" $c="#3f3f76" $bd="1px solid #7f7f7f">Input</StyleCell>
                <StyleCell $c="#fa7d00" $bb="3px double #ff8001">Linked Cell</StyleCell>
                <StyleCell $bg="#ffffcc" $c="#222" $bd="1px solid #b2b2b2">Note</StyleCell>
              </GalleryGrid>
              <GalleryScroll>
                <GalleryBtn><FadedCaretUp /></GalleryBtn>
                <GalleryBtn $mt={-1}><Caret /></GalleryBtn>
                <GalleryBtn $mt={-1}><GalleryDash /><Caret /></GalleryBtn>
              </GalleryScroll>
            </Gallery>
          </GroupBody>
          <GroupLabel><GroupName>Styles</GroupName></GroupLabel>
        </Group>

        <Group $w={135}>
          <GroupBody $pl={2}>
            <BigBtn w={42} icon={<InsertIcon />} l1="Insert" caret />
            <BigBtn w={42} icon={<DeleteIcon />} l1="Delete" caret />
            <BigBtn w={44} icon={<FormatIcon />} l1="Format" caret />
          </GroupBody>
          <GroupLabel><GroupName>Cells</GroupName></GroupLabel>
        </Group>

        <Group $w={187}>
          <GroupBody $pl={8}>
            <Stack $w={86}>
              <Line><IconBox><SigmaIcon /></IconBox><LineText>AutoSum</LineText><Caret $ml={10} /></Line>
              <Line><IconBox><FillDown /></IconBox><LineText>Fill</LineText><Caret $ml={3} /></Line>
              <Line><IconBox><Eraser /></IconBox><LineText>Clear</LineText><Caret $ml={3} /></Line>
            </Stack>
            <BigBtn w={44} icon={<SortIcon />} l1="Sort &" l2="Filter" caret />
            <BigBtn w={44} icon={<FindIcon />} l1="Find &" l2="Select" caret />
          </GroupBody>
          <GroupLabel><GroupName>Editing</GroupName></GroupLabel>
        </Group>

        <Collapse>
          <Svg width="9" height="6" viewBox="0 0 9 6"><path d="M1 5l3.500-3.500L8 5" fill="none" stroke="#666" strokeWidth="1.600" /></Svg>
        </Collapse>
      </Ribbon>

      <FormulaRow>
        <NameBox>F10<Caret $c="#555" /></NameBox>
        <Dots $w={30}><Dot /><Dot /><Dot /></Dots>
        <FxBox>
          <Slot $w={37}>
            <Svg width="15" height="15" viewBox="0 0 15 15"><path d="M1 1l13 13M14 1 1 14" stroke="#b4b4b4" strokeWidth="2" /></Svg>
          </Slot>
          <Slot $w={37}>
            <Svg width="16" height="14" viewBox="0 0 16 14"><path d="M1 8l5 5L15 1" fill="none" stroke="#b4b4b4" strokeWidth="2.600" /></Svg>
          </Slot>
          <Slot $w={34}><FxMark>fx</FxMark></Slot>
        </FxBox>
        <FormulaInput>
          <Svg width="14" height="9" viewBox="0 0 14 9"><path d="M1 1.500l6 6 6-6" fill="none" stroke="#555" strokeWidth="2.200" /></Svg>
        </FormulaInput>
      </FormulaRow>

      <SheetArea>
        <SheetMain>
          <GridRow $h={19}>
            <Corner><CornerMark /></Corner>
            {colLetters.map(c => <ColHead key={c} $sel={c === "F"} $pl={c === "K" ? 42 : 0}>{c}</ColHead>)}
          </GridRow>
          <GridRow $h={100}>
            <RowHead>1</RowHead>
            {headers.map(([t, bg]) => <HeadCell key={t} $bg={bg}>{t}</HeadCell>)}
            <HeadCell $bg="#fff" $open />
          </GridRow>
          <Freeze />
          {rows.map(r => (
            <GridRow key={r.h + "-" + r.n} $h={r.h}>
              <RowHead $sel={r.sel}>{r.n}</RowHead>
              <Cell $bg={r.bg} $line={r.last ? "transparent" : r.aLine}>{r.a}</Cell>
              {middle.map(i => {
                const Kind = r.sel && i === 4 ? Selected : Cell;
                return <Kind key={i} $line={r.last ? "transparent" : "#000"} />;
              })}
              <Cell $open $line={r.last ? "transparent" : "#d4d4d4"} />
            </GridRow>
          ))}
        </SheetMain>
        <ScrollCol>
          <VBar $h={111}>
            <ScrollBtn><CaretUp /></ScrollBtn>
            <Thumb $h={17} $mt={1} />
            <Track />
            <ScrollBtn><Caret /></ScrollBtn>
          </VBar>
          <VBar $mt={10}>
            <ScrollBtn><CaretUp /></ScrollBtn>
            <Thumb $h={72} $mt={116} />
            <Track />
            <ScrollBtn><Caret /></ScrollBtn>
          </VBar>
        </ScrollCol>
      </SheetArea>

      <TabBar>
        <Slot $w={30} $h={27}><Svg width="5" height="8" viewBox="0 0 5 8"><path d="M4 0v8L0 4z" fill="#999" /></Svg></Slot>
        <Slot $w={28} $h={27}><Svg width="5" height="8" viewBox="0 0 5 8"><path d="M1 0v8l4-4z" fill="#999" /></Svg></Slot>
        <SheetTab>Limiting Beliefs</SheetTab>
        <SheetTab2>Sedona Method</SheetTab2>
        <TabSep />
        <PlusBox>
          <Svg width="16" height="16" viewBox="0 0 16 16">
            <circle cx="8" cy="8" r="7" fill="none" stroke="#666" strokeWidth="1.300" />
            <path d="M8 4v8M4 8h8" stroke="#555" strokeWidth="1.600" />
          </Svg>
        </PlusBox>
        <TabDots><Dots $w={6}><Dot /><Dot /><Dot /></Dots></TabDots>
        <HScroll>
          <HBtn><Svg width="4" height="8" viewBox="0 0 4 8"><path d="M4 0v8L0 4z" fill="#777" /></Svg></HBtn>
          <HThumb />
          <Track />
          <HBtn><Svg width="4" height="8" viewBox="0 0 4 8"><path d="M0 0v8l4-4z" fill="#777" /></Svg></HBtn>
        </HScroll>
      </TabBar>
    </Win>
  );
}
